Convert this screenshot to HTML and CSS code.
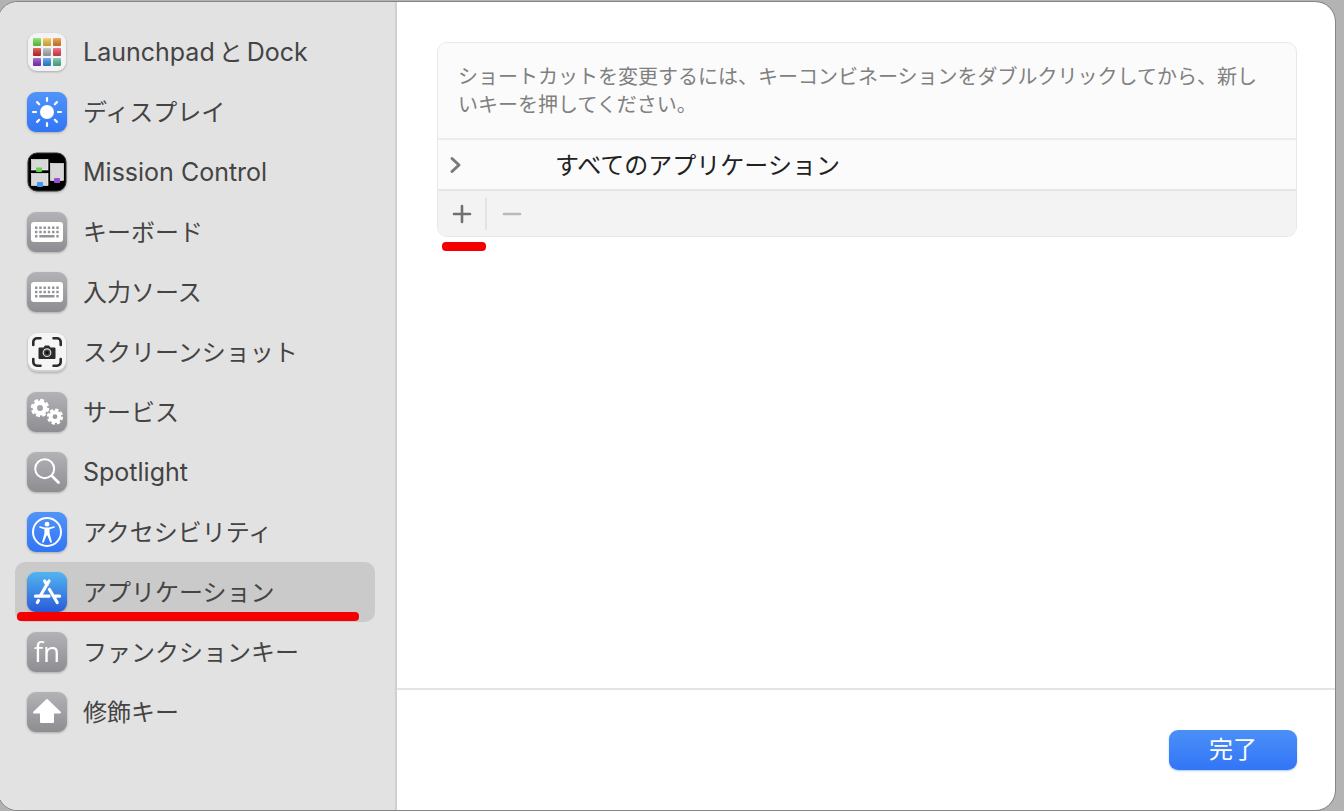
FILE: index.html
```
<!DOCTYPE html>
<html lang="ja">
<head>
    <meta charset="UTF-8">
    <meta name="viewport" content="width=device-width, initial-scale=1.0">
    <title>キーボードショートカット</title>
    <link rel="stylesheet" href="styles.css">
</head>
<body>
    <div class="window">
        <nav class="sidebar">
            <ul>
                <li>
                    <a href="#launchpad">
                        <svg class="icon" viewBox="0 0 40 40">
                            <defs>
                                <linearGradient id="shade" x1="0" y1="0" x2="0" y2="1">
                                    <stop offset="0" stop-color="#fff" stop-opacity="0.3"/>
                                    <stop offset="1" stop-color="#000" stop-opacity="0.2"/>
                                </linearGradient>
                            </defs>
                            <rect x="1" y="1" width="38" height="38" rx="9" fill="#f3f3f3"/>
                            <g id="tiles">
                                <rect x="6" y="6" width="8" height="8" rx="1" fill="#6edc4c"/>
                                <rect x="16" y="6" width="8" height="8" rx="1" fill="#f7c13d"/>
                                <rect x="26" y="6" width="8" height="8" rx="1" fill="#ea8a2e"/>
                                <rect x="6" y="16" width="8" height="8" rx="1" fill="#d92d26"/>
                                <rect x="16" y="16" width="8" height="8" rx="1" fill="#aeb5b9"/>
                                <rect x="26" y="16" width="8" height="8" rx="1" fill="#ee4058"/>
                                <rect x="6" y="26" width="8" height="8" rx="1" fill="#8a35c4"/>
                                <rect x="16" y="26" width="8" height="8" rx="1" fill="#2f8fee"/>
                                <rect x="26" y="26" width="8" height="8" rx="1" fill="#55bd9b"/>
                            </g>
                            <g fill="url(#shade)">
                                <rect x="6" y="6" width="8" height="8" rx="1"/>
                                <rect x="16" y="6" width="8" height="8" rx="1"/>
                                <rect x="26" y="6" width="8" height="8" rx="1"/>
                                <rect x="6" y="16" width="8" height="8" rx="1"/>
                                <rect x="16" y="16" width="8" height="8" rx="1"/>
                                <rect x="26" y="16" width="8" height="8" rx="1"/>
                                <rect x="6" y="26" width="8" height="8" rx="1"/>
                                <rect x="16" y="26" width="8" height="8" rx="1"/>
                                <rect x="26" y="26" width="8" height="8" rx="1"/>
                            </g>
                        </svg>
                        <span class="label mixed">Launchpad<span class="kana">と</span>Dock</span>
                    </a>
                </li>
                <li>
                    <a href="#display">
                        <svg class="icon blue" viewBox="0 0 40 40">
                            <circle cx="20" cy="20" r="7" fill="#fff"/>
                            <path stroke="#fff" stroke-width="2.2" stroke-linecap="round" d="M20 6v3M20 31v3M6 20h3M31 20h3M10.1 10.1l2.1 2.1M27.8 27.8l2.1 2.1M29.9 10.1l-2.1 2.1M12.2 27.8l-2.1 2.1"/>
                        </svg>
                        <span class="label">ディスプレイ</span>
                    </a>
                </li>
                <li>
                    <a href="#mission-control">
                        <svg class="icon" viewBox="0 0 40 40">
                            <rect x="1" y="1" width="38" height="38" rx="9" fill="#000" stroke="#333"/>
                            <g fill="#d8d8d8" stroke="#fff" stroke-width="0.6">
                                <rect x="4.5" y="7.5" width="16.5" height="10.5"/>
                                <rect x="4.5" y="21.5" width="16.5" height="12"/>
                                <rect x="23.5" y="11.5" width="13" height="17"/>
                            </g>
                            <rect x="9" y="15.5" width="6" height="4.5" rx="1" fill="#61d34f"/>
                            <rect x="10" y="30" width="6" height="5" rx="1" fill="#3a9df0"/>
                            <rect x="27" y="26" width="6" height="5" rx="1" fill="#9b4fd6"/>
                        </svg>
                        <span class="label latin">Mission Control</span>
                    </a>
                </li>
                <li>
                    <a href="#keyboard">
                        <svg class="icon gray" viewBox="0 0 40 40">
                            <g id="keys">
                                <rect x="4" y="10" width="32" height="20" rx="3" fill="#fff"/>
                                <path stroke="#929297" stroke-width="2.4" stroke-dasharray="2.4 1.86" d="M8 15.7h24M8 20h24"/>
                                <path stroke="#929297" stroke-width="2.4" d="M8 24.3h2.4M12.3 24.3h15.2M29.3 24.3h2.4"/>
                            </g>
                        </svg>
                        <span class="label">キーボード</span>
                    </a>
                </li>
                <li>
                    <a href="#input-source">
                        <svg class="icon gray" viewBox="0 0 40 40"><use href="#keys"/></svg>
                        <span class="label">入力ソース</span>
                    </a>
                </li>
                <li>
                    <a href="#screenshot">
                        <svg class="icon" viewBox="0 0 40 40">
                            <rect x="1" y="2" width="38" height="38" rx="9" fill="#cfcfcf"/>
                            <rect x="1" y="1" width="38" height="37" rx="9" fill="#f5f5f5"/>
                            <path fill="none" stroke="#2b2b2b" stroke-width="2.6" stroke-linecap="round" d="M6.3 13V10a3.7 3.7 0 0 1 3.7-3.7h3.5M26.5 6.3H30a3.7 3.7 0 0 1 3.7 3.7v3M33.7 27v3a3.7 3.7 0 0 1-3.7 3.7h-3.5M13.5 33.7H10A3.7 3.7 0 0 1 6.3 30v-3"/>
                            <path fill="#2b2b2b" d="M12.5 15.5h4l1.500-2h4l1.500 2h4a1 1 0 0 1 1 1V26a1 1 0 0 1-1 1h-15a1 1 0 0 1-1-1v-9.500a1 1 0 0 1 1-1z"/>
                            <circle cx="20" cy="20.7" r="3.8" fill="#444" stroke="#ddd" stroke-width="1.2"/>
                            <circle cx="20" cy="20.7" r="1.6" fill="#111"/>
                        </svg>
                        <span class="label">スクリーンショット</span>
                    </a>
                </li>
                <li>
                    <a href="#services">
                        <svg class="icon gray" viewBox="0 0 40 40" fill="none" stroke="#fff">
                            <circle cx="13" cy="16" r="5.2" stroke-width="4.4"/>
                            <circle cx="13" cy="16" r="7.8" stroke-width="2.8" stroke-dasharray="3.8 2.326"/>
                            <circle cx="28" cy="24.7" r="4.4" stroke-width="4"/>
                            <circle cx="28" cy="24.7" r="6.8" stroke-width="2.6" stroke-dasharray="3.3 2.041"/>
                        </svg>
                        <span class="label">サービス</span>
                    </a>
                </li>
                <li>
                    <a href="#spotlight">
                        <svg class="icon gray" viewBox="0 0 40 40" fill="none" stroke="#fff" stroke-linecap="round">
                            <circle cx="17.7" cy="16.7" r="9.5" stroke-width="2"/>
                            <path stroke-width="2.8" d="M25 24l6.500 6.500"/>
                        </svg>
                        <span class="label latin">Spotlight</span>
                    </a>
                </li>
                <li>
                    <a href="#accessibility">
                        <svg class="icon blue" viewBox="0 0 40 40">
                            <circle cx="20" cy="20" r="14" fill="none" stroke="#fff" stroke-width="2"/>
                            <circle cx="20" cy="12.2" r="2.4" fill="#fff"/>
                            <path fill="#fff" d="M13 14.2l5 1.3h4l5-1.3a.8.8 0 0 1 .4 1.5L22.600 17.2v4.3l2.2 8a.9.9 0 0 1-1.7.6L20.4 23.5h-.8l-2.7 6.6a.9.9 0 0 1-1.7-.6l2.2-8v-4.3l-4.8-1.5a.8.8 0 0 1 .4-1.5z"/>
                        </svg>
                        <span class="label">アクセシビリティ</span>
                    </a>
                </li>
                <li class="selected">
                    <a href="#apps" aria-current="page">
                        <svg class="icon store" viewBox="0 0 40 40" fill="none" stroke="#fff" stroke-width="3.2" stroke-linecap="round">
                            <path d="M22 9L13.2 24M17.6 9L20 13M22.5 17.5L30.2 30.5M8.5 24.2H22M28 24.2h4.500M11.500 28.500L10.300 30.500"/>
                        </svg>
                        <span class="label">アプリケーション</span>
                    </a>
                    <span class="marker"></span>
                </li>
                <li>
                    <a href="#function-keys">
                        <span class="icon gray fn">fn</span>
                        <span class="label">ファンクションキー</span>
                    </a>
                </li>
                <li>
                    <a href="#modifier-keys">
                        <svg class="icon gray" viewBox="0 0 40 40">
                            <path fill="#fff" stroke="#fff" stroke-width="2" stroke-linejoin="round" d="M20 8L33 20.500H26V30H14V20.500H7z"/>
                        </svg>
                        <span class="label">修飾キー</span>
                    </a>
                </li>
            </ul>
        </nav>
        <main>
            <div class="content">
                <div class="panel">
                    <p>ショートカットを変更するには、キーコンビネーションをダブルクリックしてから、新しいキーを押してください。</p>
                    <button type="button" class="group" aria-expanded="false">
                        <svg width="16" height="20" viewBox="0 0 16 20" fill="none" stroke="#7a7a7a" stroke-width="3" stroke-linecap="round" stroke-linejoin="round">
                            <path d="M4 3.500l7 6.500-7 6.500"/>
                        </svg>
                        <span class="label">すべてのアプリケーション</span>
                    </button>
                    <div class="toolbar">
                        <button type="button" aria-label="追加">
                            <svg width="20" height="20" viewBox="0 0 20 20" stroke="#707070" stroke-width="2.6" stroke-linecap="round">
                                <path d="M10 2v16M2 10h16"/>
                            </svg>
                        </button>
                        <button type="button" aria-label="削除" disabled>
                            <svg width="20" height="20" viewBox="0 0 20 20" stroke="#b9b9b9" stroke-width="2.6" stroke-linecap="round">
                                <path d="M2 10h16"/>
                            </svg>
                        </button>
                        <span class="marker"></span>
                    </div>
                </div>
            </div>
            <footer>
                <button type="button" class="done">完了</button>
            </footer>
        </main>
    </div>
</body>
</html>
```
FILE: styles.css
```
* {
    box-sizing: border-box;
}
body {
    margin: 0;
    padding: 2px 9px 1px 0;
    min-height: 100vh;
    display: flex;
    overflow-x: hidden;
    background: #b3b3b3;
    font-family: Inter, 'Noto Sans CJK JP', sans-serif;
    font-size: 24px;
}
button {
    padding: 0;
    border: none;
    background: none;
    font: inherit;
}
.window {
    flex: 1;
    display: flex;
    margin-left: -2px;
    background: #fff;
    border-radius: 20px;
    box-shadow: 0 0 0 1px #858585;
    overflow: hidden;
}

/* Barra lateral */
.sidebar {
    flex: 0 0 399px;
    padding: 20px 20px 20px 17px;
    background: #e2e2e2;
    border-right: 2px solid #d0d0d0;
}
.sidebar ul {
    margin: 0;
    padding: 0;
    list-style: none;
}
.sidebar li {
    position: relative;
    border-radius: 10px;
}
.sidebar a {
    display: flex;
    align-items: center;
    gap: 16px;
    height: 60px;
    padding: 0 12px;
    color: #444;
    text-decoration: none;
    white-space: nowrap;
}
.sidebar .selected {
    background: #cacaca;
}
.label {
    padding-bottom: 3px;
}
.mixed,
.latin {
    font-size: 25px;
}
.latin {
    padding-bottom: 0;
}
.kana {
    margin: 0 4px;
    font-size: 24px;
}
.icon {
    flex: none;
    width: 40px;
    height: 40px;
    border-radius: 9px;
    filter: drop-shadow(0 1px 1px rgba(0, 0, 0, 0.25));
}
.blue {
    background: linear-gradient(#5194f8, #3175f6);
}
.gray {
    background: linear-gradient(#b2b2b7, #8d8d92);
}
.store {
    background: linear-gradient(#51b5f0, #2a5bd8);
}
.fn {
    color: #fff;
    font-family: 'Open Sans', sans-serif;
    font-size: 28px;
    line-height: 38px;
    text-align: center;
}

/* Marcas rojas */
.marker {
    position: absolute;
    height: 9px;
    border-radius: 4px;
    background: #f40000;
}
.selected .marker {
    left: 2px;
    right: 16px;
    bottom: 1px;
}
.toolbar .marker {
    left: 4px;
    width: 44px;
    bottom: -15px;
}

/* Contenido */
main {
    flex: 1;
    display: flex;
    flex-direction: column;
}
.content {
    flex: 1;
    padding: 40px 38px 40px 40px;
}
.panel {
    border: 1px solid #e8e8e8;
    border-radius: 10px;
    background: #fbfbfb;
}
.panel p {
    margin: 0;
    padding: 20px 20px 19px;
    color: #808080;
    font-size: 20px;
    line-height: 28px;
}
.group {
    display: flex;
    align-items: center;
    gap: 91px;
    width: 100%;
    height: 53px;
    padding: 0 10px;
    border-top: 2px solid #ececec;
    border-bottom: 2px solid #e6e6e6;
    color: #222;
}
.toolbar {
    position: relative;
    display: flex;
    align-items: center;
    height: 45px;
    background: #f3f3f3;
    border-radius: 0 0 9px 9px;
}
.toolbar button {
    display: flex;
    align-items: center;
    justify-content: center;
    width: 49px;
    height: 32px;
}
.toolbar button:first-child {
    border-right: 2px solid #e3e3e3;
}
footer {
    display: flex;
    justify-content: flex-end;
    padding: 40px 38px;
    border-top: 2px solid #e4e4e4;
}
.done {
    width: 128px;
    height: 40px;
    border-radius: 9px;
    background: linear-gradient(#4b90f8, #3275f6);
    box-shadow: 0 1px 2px rgba(50, 117, 246, 0.4);
    color: #fff;
    line-height: 36px;
}
```
